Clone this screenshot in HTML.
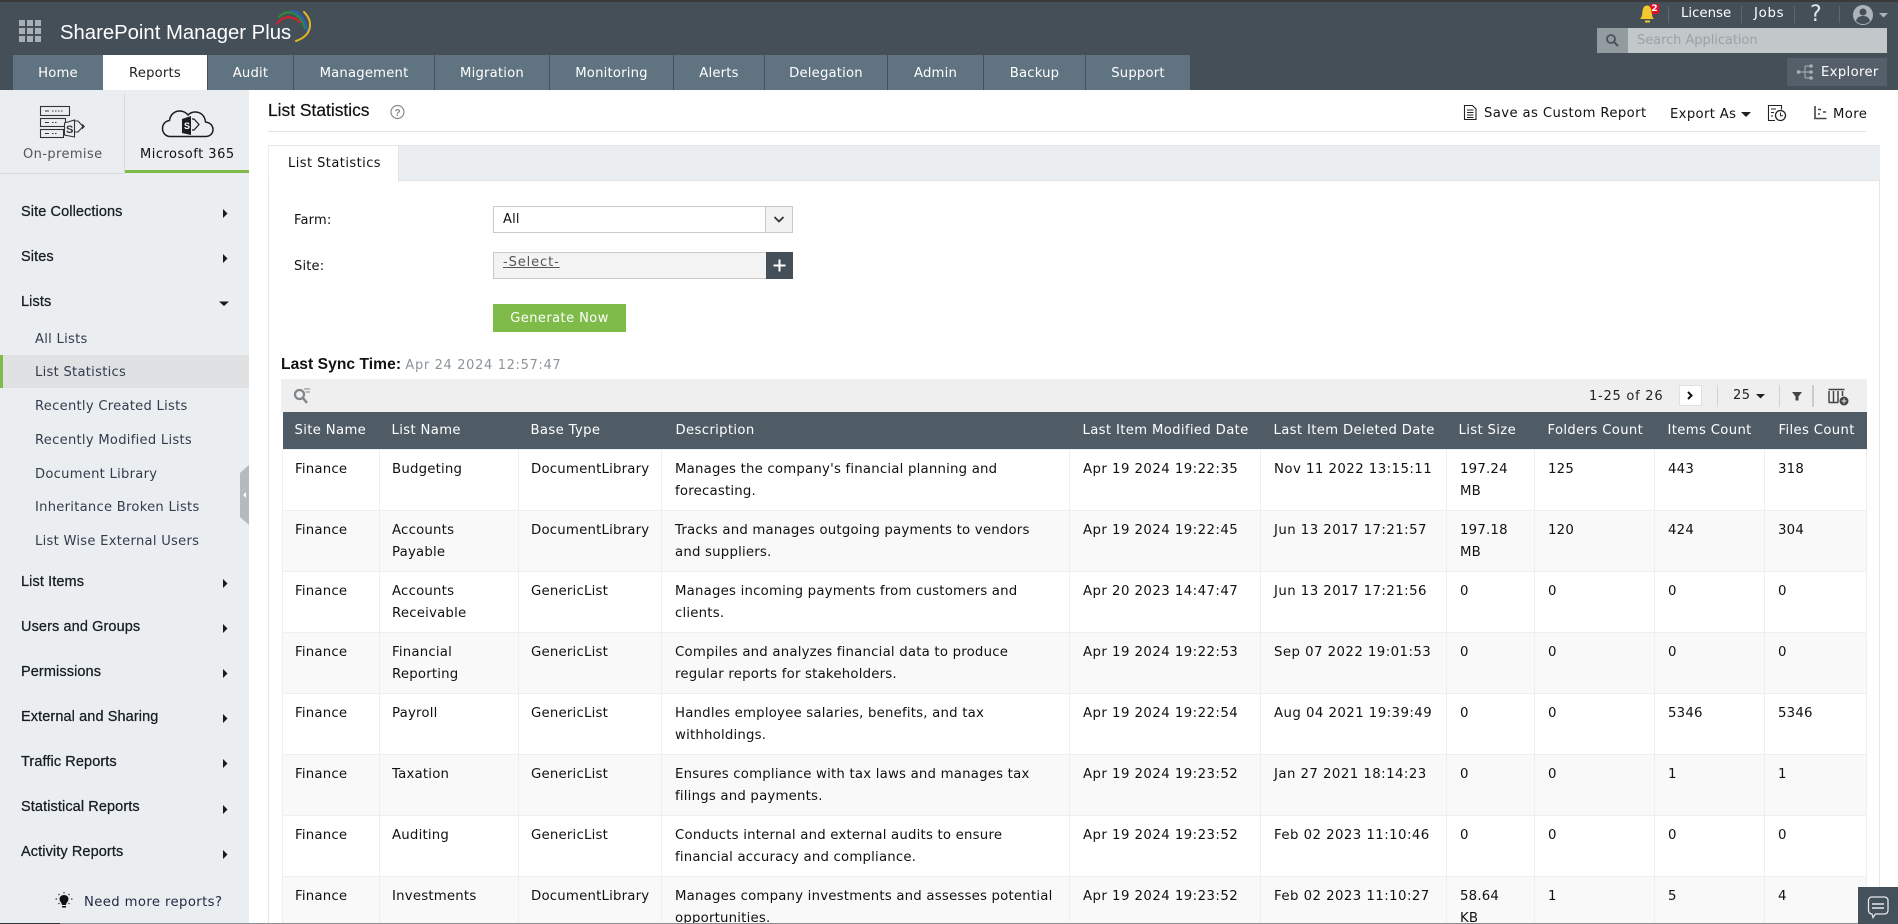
<!DOCTYPE html>
<html style="overflow:hidden"><head><meta charset="utf-8"><title>List Statistics</title>
<style>
html,body{margin:0;padding:0;background:#fff;width:1898px;height:924px;overflow:hidden}
#w{position:absolute;left:0;top:0;width:1898px;height:924px;overflow:hidden;font-family:"DejaVu Sans","Liberation Sans",sans-serif;font-size:13.3px;color:#111;letter-spacing:.2px}
.a{position:absolute}
.t{position:absolute;white-space:nowrap;line-height:20px}
.l{font-family:"Liberation Sans",sans-serif}
.nav{position:absolute;top:55px;height:35px;line-height:37px;background:#607380;color:#fff;text-align:center;font-size:13.2px;letter-spacing:.2px}
.h{position:absolute;left:21px;white-space:nowrap;line-height:20px;font-family:"Liberation Sans",sans-serif;font-size:14.5px;letter-spacing:.1px;color:#161c24;-webkit-text-stroke:.25px #161c24}
.s{position:absolute;left:35px;white-space:nowrap;line-height:20px;color:#333c4d;font-size:13.1px;letter-spacing:.28px}
table{position:absolute;left:282px;top:412px;width:1584px;border-collapse:collapse;table-layout:fixed}
th{height:37px;padding:1px 0 0 13px;background:#4f5c66;color:#fff;font-weight:normal;text-align:left;white-space:nowrap;font-size:13.2px;letter-spacing:.36px;box-sizing:border-box;border:0}
td{height:61px;box-sizing:border-box;padding:9px 0 0 13px;line-height:22px;vertical-align:top;border:1px solid #efefef;white-space:nowrap;overflow:hidden}
tr:nth-child(even) td{background:#f9f9f9}
td:nth-child(1),td:nth-child(2),td:nth-child(3){padding-left:12px}
.d{letter-spacing:.45px}
</style></head><body><div id="w">

<!-- header -->
<div class="a" style="left:0;top:0;width:1898px;height:90px;background:#444f58"></div>
<div class="a" style="left:0;top:0;width:1898px;height:2px;background:#3a3a3a"></div>
<div class="t l" style="left:60px;top:22px;font-size:20.3px;line-height:22px;color:#fff;letter-spacing:0">SharePoint Manager Plus</div>

<div class="nav" style="left:13px;width:90px">Home</div>
<div class="nav" style="left:103px;width:104px;background:#fff;color:#222">Reports</div>
<div class="nav" style="left:208px;width:85px">Audit</div>
<div class="nav" style="left:294px;width:140px">Management</div>
<div class="nav" style="left:435px;width:114px">Migration</div>
<div class="nav" style="left:550px;width:123px">Monitoring</div>
<div class="nav" style="left:674px;width:90px">Alerts</div>
<div class="nav" style="left:765px;width:122px">Delegation</div>
<div class="nav" style="left:888px;width:95px">Admin</div>
<div class="nav" style="left:984px;width:101px">Backup</div>
<div class="nav" style="left:1086px;width:104px">Support</div>

<div class="t" style="left:1681px;top:4px;color:#fff;font-size:13.3px;letter-spacing:0">License</div>
<div class="t" style="left:1754px;top:4px;color:#fff;font-size:13.3px;letter-spacing:.7px">Jobs</div>
<div class="t" style="left:1810px;top:5px;color:#e4e7e9;font-size:22px;letter-spacing:0">?</div>
<div class="a" style="left:1668px;top:6px;width:1px;height:17px;background:#5d6972"></div>
<div class="a" style="left:1741px;top:6px;width:1px;height:17px;background:#5d6972"></div>
<div class="a" style="left:1794px;top:6px;width:1px;height:17px;background:#5d6972"></div>
<div class="a" style="left:1839px;top:6px;width:1px;height:17px;background:#5d6972"></div>
<div class="a" style="left:1650px;top:4px;width:9px;height:10px;background:#e5102a;border-radius:2px;color:#fff;font-size:9px;line-height:10px;text-align:center;font-weight:bold;letter-spacing:0">2</div>

<div class="a" style="left:1597px;top:28px;width:290px;height:25px;background:#c2c7ca"></div>
<div class="a" style="left:1597px;top:28px;width:31px;height:25px;background:#929ba0"></div>
<div class="t" style="left:1637px;top:33px;line-height:16px;color:#9ba1a5;font-size:13px;letter-spacing:-.05px">Search Application</div>
<div class="a" style="left:1787px;top:58px;width:100px;height:28px;background:#555f69"></div>
<div class="t" style="left:1821px;top:63px;color:#fff;font-size:13.2px;letter-spacing:.35px">Explorer</div>

<!-- sidebar -->
<div class="a" style="left:0;top:90px;width:249px;height:834px;background:#ebeef0"></div>
<div class="a" style="left:0;top:173px;width:125px;height:1px;background:#d8dbdd"></div>
<div class="a" style="left:124px;top:93px;width:1px;height:80px;background:#d8dbdd"></div>
<div class="a" style="left:125px;top:170px;width:124px;height:3px;background:#7fbb48"></div>
<div class="t" style="left:23px;top:145px;color:#555;font-size:13px;letter-spacing:.4px">On-premise</div>
<div class="t" style="left:140px;top:145px;color:#111;font-size:13px;letter-spacing:.5px">Microsoft 365</div>

<div class="h" style="top:202px">Site Collections</div>
<div class="h" style="top:247px">Sites</div>
<div class="h" style="top:292px">Lists</div>
<div class="a" style="left:0;top:355px;width:249px;height:33px;background:#e0e1e3"></div>
<div class="a" style="left:0;top:355px;width:3px;height:33px;background:#7fbb48"></div>
<div class="s" style="top:330px">All Lists</div>
<div class="s" style="top:363px">List Statistics</div>
<div class="s" style="top:397px">Recently Created Lists</div>
<div class="s" style="top:431px">Recently Modified Lists</div>
<div class="s" style="top:465px">Document Library</div>
<div class="s" style="top:498px">Inheritance Broken Lists</div>
<div class="s" style="top:532px">List Wise External Users</div>
<div class="h" style="top:572px">List Items</div>
<div class="h" style="top:617px">Users and Groups</div>
<div class="h" style="top:662px">Permissions</div>
<div class="h" style="top:707px">External and Sharing</div>
<div class="h" style="top:752px">Traffic Reports</div>
<div class="h" style="top:797px">Statistical Reports</div>
<div class="h" style="top:842px">Activity Reports</div>
<div class="s" style="left:84px;top:893px;color:#1f2a44;font-size:13.2px;letter-spacing:.4px">Need more reports?</div>

<!-- title bar -->
<div class="t l" style="left:268px;top:100px;font-size:17.4px;letter-spacing:0;color:#111;-webkit-text-stroke:.2px #111">List Statistics</div>
<div class="a" style="left:268px;top:131px;width:1598px;height:1px;background:#e2e2e2"></div>
<div class="t" style="left:1484px;top:104px;font-size:13.2px;letter-spacing:.4px">Save as Custom Report</div>
<div class="t" style="left:1670px;top:105px;font-size:13.2px;letter-spacing:.35px">Export As</div>
<div class="t" style="left:1833px;top:105px;font-size:13.2px;letter-spacing:.4px">More</div>

<!-- panel -->
<div class="a" style="left:268px;top:145px;width:1px;height:779px;background:#e6e6e6"></div>
<div class="a" style="left:1879px;top:145px;width:1px;height:779px;background:#e6e6e6"></div>
<div class="a" style="left:268px;top:145px;width:1612px;height:36px;background:#ebeef0;border-top:1px solid #e4e6e8;border-bottom:1px solid #e2e4e6;box-sizing:border-box"></div>
<div class="a" style="left:269px;top:146px;width:130px;height:36px;background:#fff;border-right:1px solid #e2e4e6;box-sizing:border-box"></div>
<div class="t" style="left:288px;top:154px;font-size:13px;letter-spacing:.45px">List Statistics</div>

<div class="t" style="left:294px;top:211px;font-size:13px">Farm:</div>
<div class="t" style="left:294px;top:257px;font-size:13px">Site:</div>
<div class="a" style="left:493px;top:206px;width:300px;height:27px;border:1px solid #c9c9c9;box-sizing:border-box;background:#fff"></div>
<div class="a" style="left:765px;top:207px;width:27px;height:25px;background:#f2f2f2;border-left:1px solid #c9c9c9;box-sizing:border-box"></div>
<div class="t" style="left:503px;top:210px;font-size:13px">All</div>
<div class="a" style="left:493px;top:252px;width:273px;height:27px;border:1px solid #c9c9c9;border-right:0;box-sizing:border-box;background:#f3f3f3"></div>
<div class="a" style="left:766px;top:252px;width:27px;height:27px;background:#444f58"></div>
<div class="t" style="left:503px;top:253px;font-size:13px;letter-spacing:.9px;color:#555;text-decoration:underline">-Select-</div>
<div class="a" style="left:493px;top:304px;width:133px;height:28px;background:#7fbb48;color:#fff;text-align:center;line-height:30px;font-size:13px;letter-spacing:.45px">Generate Now</div>
<div class="t" style="left:281px;top:355px;font-size:13px"><b style="color:#111;font-family:'Liberation Sans',sans-serif;font-size:15.6px;letter-spacing:.05px">Last Sync Time:</b> <span style="color:#8d9499;letter-spacing:.65px">Apr 24 2024 12:57:47</span></div>

<!-- toolbar -->
<div class="a" style="left:281px;top:379px;width:1586px;height:33px;background:#efefef"></div>
<div class="t" style="left:1589px;top:387px;font-size:13px;letter-spacing:.75px;color:#222">1-25 of 26</div>
<div class="a" style="left:1679px;top:385px;width:23px;height:21px;background:#fff;border:1px solid #e0e0e0;box-sizing:border-box"></div>
<div class="a" style="left:1717px;top:385px;width:1px;height:22px;background:#d2d2d2"></div>
<div class="t" style="left:1733px;top:386px;font-size:13px;letter-spacing:.5px;color:#222">25</div>
<div class="a" style="left:1779px;top:385px;width:1px;height:22px;background:#d2d2d2"></div>
<div class="a" style="left:1812px;top:385px;width:2px;height:22px;background:#cbcbcb"></div>

<!-- table -->
<table>
<colgroup><col style="width:97px"><col style="width:139px"><col style="width:143px"><col style="width:408px"><col style="width:191px"><col style="width:186px"><col style="width:88px"><col style="width:120px"><col style="width:110px"><col style="width:102px"></colgroup>
<thead><tr><th style="padding-left:12px">Site Name</th><th style="padding-left:12px">List Name</th><th style="padding-left:12px">Base Type</th><th style="padding-left:14px">Description</th><th>Last Item Modified Date</th><th>Last Item Deleted Date</th><th style="padding-left:12px">List Size</th><th>Folders Count</th><th>Items Count</th><th style="padding-left:14px">Files Count</th></tr></thead>
<tbody>
<tr><td>Finance</td><td>Budgeting</td><td>DocumentLibrary</td><td>Manages the company's financial planning and<br>forecasting.</td><td class="d">Apr 19 2024 19:22:35</td><td class="d">Nov 11 2022 13:15:11</td><td>197.24<br>MB</td><td>125</td><td>443</td><td>318</td></tr>
<tr><td>Finance</td><td>Accounts<br>Payable</td><td>DocumentLibrary</td><td>Tracks and manages outgoing payments to vendors<br>and suppliers.</td><td class="d">Apr 19 2024 19:22:45</td><td class="d">Jun 13 2017 17:21:57</td><td>197.18<br>MB</td><td>120</td><td>424</td><td>304</td></tr>
<tr><td>Finance</td><td>Accounts<br>Receivable</td><td>GenericList</td><td>Manages incoming payments from customers and<br>clients.</td><td class="d">Apr 20 2023 14:47:47</td><td class="d">Jun 13 2017 17:21:56</td><td>0</td><td>0</td><td>0</td><td>0</td></tr>
<tr><td>Finance</td><td>Financial<br>Reporting</td><td>GenericList</td><td>Compiles and analyzes financial data to produce<br>regular reports for stakeholders.</td><td class="d">Apr 19 2024 19:22:53</td><td class="d">Sep 07 2022 19:01:53</td><td>0</td><td>0</td><td>0</td><td>0</td></tr>
<tr><td>Finance</td><td>Payroll</td><td>GenericList</td><td>Handles employee salaries, benefits, and tax<br>withholdings.</td><td class="d">Apr 19 2024 19:22:54</td><td class="d">Aug 04 2021 19:39:49</td><td>0</td><td>0</td><td>5346</td><td>5346</td></tr>
<tr><td>Finance</td><td>Taxation</td><td>GenericList</td><td>Ensures compliance with tax laws and manages tax<br>filings and payments.</td><td class="d">Apr 19 2024 19:23:52</td><td class="d">Jan 27 2021 18:14:23</td><td>0</td><td>0</td><td>1</td><td>1</td></tr>
<tr><td>Finance</td><td>Auditing</td><td>GenericList</td><td>Conducts internal and external audits to ensure<br>financial accuracy and compliance.</td><td class="d">Apr 19 2024 19:23:52</td><td class="d">Feb 02 2023 11:10:46</td><td>0</td><td>0</td><td>0</td><td>0</td></tr>
<tr><td>Finance</td><td>Investments</td><td>DocumentLibrary</td><td>Manages company investments and assesses potential<br>opportunities.</td><td class="d">Apr 19 2024 19:23:52</td><td class="d">Feb 02 2023 11:10:27</td><td>58.64<br>KB</td><td>1</td><td>5</td><td>4</td></tr>
</tbody></table>

<!-- bottom strip + chat -->
<div class="a" style="left:0;top:923px;width:1898px;height:1px;background:#8a8f93"></div>
<div class="a" style="left:0;top:923px;width:60px;height:1px;background:#333"></div>
<div class="a" style="left:1858px;top:887px;width:40px;height:37px;background:#44505a"></div>

<!-- icons in page coordinates -->
<svg class="a" style="left:0;top:0;pointer-events:none" width="1898" height="924" viewBox="0 0 1898 924">
<!-- app grid -->
<g fill="#a9b0b5"><rect x="19" y="20" width="6" height="6"/><rect x="27" y="20" width="6" height="6"/><rect x="35" y="20" width="6" height="6"/><rect x="19" y="28" width="6" height="6"/><rect x="27" y="28" width="6" height="6"/><rect x="35" y="28" width="6" height="6"/><rect x="19" y="36" width="6" height="6"/><rect x="27" y="36" width="6" height="6"/><rect x="35" y="36" width="6" height="6"/></g>
<!-- logo swoosh -->
<g fill="none" stroke-linecap="round">
<path d="M277 24C281 17 291 14 300 22" stroke="#d8202a" stroke-width="2"/>
<path d="M279 17C287 9 299 11 305 28" stroke="#2f8a3a" stroke-width="2.2"/>
<path d="M292 11C300 12 306 20 307 31" stroke="#2a5fb0" stroke-width="2.4"/>
<path d="M304 12C313 21 313 35 296 41" stroke="#e8b71e" stroke-width="2"/>
</g>
<!-- bell -->
<path d="M1640 19c2-2 2-4 2.500-8 .5-4 2.500-5.500 4.500-5.500s4 1.500 4.500 5.500c.5 4 .5 6 2.500 8z" fill="#f3c92e"/><rect x="1645" y="20.500" width="5" height="2" fill="#f3c92e"/>
<!-- avatar -->
<circle cx="1863" cy="15" r="10" fill="#aeb5ba"/><circle cx="1863" cy="12" r="3.500" fill="#444f58"/><path d="M1856 21c1-4 4-5 7-5s6 1 7 5c-2 2-4 3-7 3s-5-1-7-3z" fill="#444f58"/>
<path d="M1879 13h9l-4.500 4.500z" fill="#aeb5ba"/>
<!-- search -->
<circle cx="1611" cy="39" r="4" fill="none" stroke="#49525a" stroke-width="1.800"/><path d="M1614 42l4 4" stroke="#49525a" stroke-width="2"/>
<!-- explorer -->
<g stroke="#aab1b6" stroke-width="1" fill="#aab1b6"><path d="M1800 72h11M1805 66v12M1805 66h5M1805 78h5" fill="none"/><circle cx="1798.500" cy="72" r="1.300"/><circle cx="1811" cy="66" r="1.300"/><circle cx="1811" cy="72" r="1.300"/><circle cx="1811" cy="78" r="1.300"/></g>
<!-- on-premise -->
<g fill="none" stroke="#333" stroke-width="1.100">
<rect x="40.500" y="106.500" width="29" height="9"/><rect x="40.500" y="118.500" width="25" height="8"/><rect x="40.500" y="129.500" width="23" height="8"/>
<path d="M45 111h4M52 111h1.500M55 111h1.500M58 111h1.500M61 111h1.500M45 122.500h4M52 122.500h1.500M55 122.500h1.500M45 133.500h4M52 133.500h1.500M55 133.500h1.500"/>
<path d="M64.500 123l10-3v17l-10-2z" fill="#ebeef0"/>
<path d="M75 121h3l5 5.500-5 5.500h-3"/>
</g>
<text x="66" y="133" font-family="Liberation Sans,sans-serif" font-size="11" font-weight="bold" fill="#333">S</text>
<path d="M82 123.500l3 3-3 3z" fill="#333"/>
<!-- cloud -->
<path d="M170 136.500c-4 0-7.500-3.500-7.500-8s3-7.500 7-8c.5-6 5.500-9.500 10-9.500 3.500 0 6.500 1.500 8.500 4 2-2 4-3 7-3 6 0 10 4 10.500 10 4 .5 7.500 3 7.500 7.500s-3.500 7-7.500 7z" fill="none" stroke="#1d1d1d" stroke-width="1.500"/>
<path d="M182 119l9-3v19l-9-2z" fill="#1d1d1d"/><path d="M192 119h2l5 5.500-5 5.500h-2" fill="none" stroke="#1d1d1d" stroke-width="1.200"/>
<text x="184" y="129" font-family="Liberation Sans,sans-serif" font-size="9" font-weight="bold" fill="#fff">S</text>
<!-- sidebar arrows -->
<g fill="#1a1a1a">
<path d="M223 209l4.500 4.500-4.500 4.500z"/><path d="M223 254l4.500 4.500-4.500 4.500z"/><path d="M219 301.500h10l-5 4.500z"/>
<path d="M223 579l4.500 4.500-4.500 4.500z"/><path d="M223 624l4.500 4.500-4.500 4.500z"/><path d="M223 669l4.500 4.500-4.500 4.500z"/><path d="M223 714l4.500 4.500-4.500 4.500z"/><path d="M223 759l4.500 4.500-4.500 4.500z"/><path d="M223 805l4.500 4.500-4.500 4.500z"/><path d="M223 850l4.500 4.500-4.500 4.500z"/>
</g>
<!-- collapse handle -->
<path d="M249 465v60l-9-8v-44z" fill="#b4babd"/><path d="M246 492v6l-3-3z" fill="#fff"/>
<!-- bulb -->
<g fill="#111"><path d="M64 895c3 0 4.500 2 4.500 4 0 2.500-2 3-2.500 6h-4c-.5-3-2.500-3.500-2.500-6 0-2 1.500-4 4.500-4z"/><rect x="62" y="906" width="4" height="1.500"/></g>
<path d="M64 892v1.500M57 899h-1.500M72.500 899H71M58.500 894l1 1M69.500 894l-1 1M58.500 904l1-1M69.500 904l-1-1" stroke="#111" stroke-width="1" fill="none"/>
<!-- help -->
<circle cx="397.500" cy="112" r="6.500" fill="none" stroke="#8a8a8a" stroke-width="1.200"/>
<text x="394.500" y="116" font-family="Liberation Sans,sans-serif" font-size="10" font-weight="bold" fill="#8a8a8a">?</text>
<!-- save doc -->
<path d="M1464.500 105.500h8l3.500 3.500v10.500h-11.500z" fill="none" stroke="#222" stroke-width="1.100"/><path d="M1467 110h6.500M1467 112.500h6.500M1467 115h6.500M1467 117.500h6.500" stroke="#222"/>
<path d="M1741 112h10l-5 5z" fill="#222"/>
<!-- history -->
<path d="M1775 120.500h-6.500v-15h13v4M1771 109h5M1771 112.500h3M1771 116h2" fill="none" stroke="#222" stroke-width="1.100"/>
<circle cx="1780.500" cy="115.500" r="5" fill="none" stroke="#222" stroke-width="1.300"/><path d="M1780.500 112.500v3.200h2.500" fill="none" stroke="#222"/>
<!-- more -->
<path d="M1815 106v12.500h11.500M1818 109.500h3M1823 112h3M1818 114h2" fill="none" stroke="#444" stroke-width="1.600"/>
<!-- select chevrons, plus -->
<path d="M774.500 217l4.500 4.500 4.500-4.500" fill="none" stroke="#333" stroke-width="1.800"/>
<path d="M779.500 259.500v12M773.500 265.500h12" stroke="#fff" stroke-width="2"/>
<!-- toolbar -->
<circle cx="299.500" cy="394.500" r="4.500" fill="none" stroke="#808689" stroke-width="2.200"/><path d="M303 398l4 5" stroke="#808689" stroke-width="2.400"/><path d="M304 389h6M305.500 392h4.500" stroke="#808689"/>
<path d="M1688 392l3.500 3.500-3.500 3.500" fill="none" stroke="#111" stroke-width="2"/>
<path d="M1756 394h9l-4.500 4.500z" fill="#222"/>
<path d="M1792 392h10l-3.500 4.500v4h-3v-4z" fill="#444"/>
<path d="M1828.500 389.500h16M1829 391v11M1833.500 391v11M1838 391v11M1842.500 391v5M1828.500 402.500h10" fill="none" stroke="#444" stroke-width="1.500"/>
<circle cx="1844" cy="401" r="4.500" fill="#444"/><path d="M1844 398.500v5M1841.500 401h5" stroke="#efefef"/>
<!-- chat -->
<path d="M1871.500 897h13c2 0 3.500 1.500 3.500 3.500v10c0 2-1.500 3.500-3.500 3.500h-9l-2.500 3.500-1-3.500c-2 0-3.500-1.500-3.500-3.500v-10c0-2 1.500-3.500 3-3.500z" fill="none" stroke="#e5e8ea" stroke-width="1.300"/><path d="M1872 904h12M1872 908h12" stroke="#e5e8ea" stroke-width="1.400"/>
</svg>
</div></body></html>
